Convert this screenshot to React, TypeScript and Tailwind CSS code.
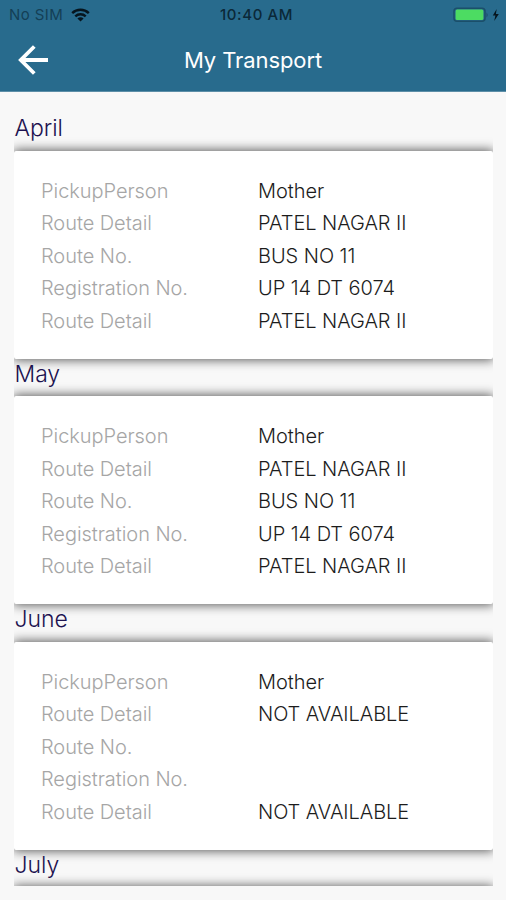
import React from 'react';

const labels = ['PickupPerson', 'Route Detail', 'Route No.', 'Registration No.', 'Route Detail'];

const months = [
  { name: 'April', values: ['Mother', 'PATEL NAGAR II', 'BUS NO 11', 'UP 14 DT 6074', 'PATEL NAGAR II'] },
  { name: 'May', values: ['Mother', 'PATEL NAGAR II', 'BUS NO 11', 'UP 14 DT 6074', 'PATEL NAGAR II'] },
  { name: 'June', values: ['Mother', 'NOT AVAILABLE', '', '', 'NOT AVAILABLE'] },
];

const StatusBar = () => (
  <div className="grid grid-cols-3 items-center h-[29px] pl-[9px] pr-[5px] text-[15px] text-[#0b2838]">
    <div className="flex items-center gap-[8px]">
      <span className="pt-px text-[#143f56] tracking-[0.4px]">No SIM</span>
      <svg width="19" height="14" viewBox="0 0 19 14" fill="none" stroke="#06151e" strokeWidth="2.4">
        <path d="M1.2 5.2a11.8 11.8 0 0 1 16.6 0" />
        <path d="M4.3 8.4a7.4 7.4 0 0 1 10.4 0" />
        <path d="M9.5 13.6L6.4 10.5a4.4 4.4 0 0 1 6.2 0z" fill="#06151e" stroke="none" />
      </svg>
    </div>
    <span className="pt-px pl-[3px] text-center font-medium whitespace-nowrap tracking-[0.6px]">10:40 AM</span>
    <div className="flex items-center justify-end">
      <svg width="48" height="16" viewBox="0 0 48 16">
        <rect x="1" y="1.2" width="31" height="13" rx="3" fill="none" stroke="#1b4f6a" strokeWidth="1.5" />
        <rect x="2.6" y="2.5" width="27.8" height="10.6" rx="1.5" fill="#4cdc62" />
        <path d="M33.5 5.5q2.4 2.5 0 5z" fill="#1b4f6a" />
        <path d="M43.7 2L39.8 8.6h2.6L41.2 14l4.6-7h-2.9z" fill="#06151e" />
      </svg>
    </div>
  </div>
);

const Header = () => (
  <header className="h-[92px] bg-[#286b8d] border-b border-[#5d8fa8]">
    <StatusBar />
    <div className="grid grid-cols-[60px_1fr_60px] items-center h-[62px]">
      <button className="pl-[17px]">
        <svg width="32" height="30" viewBox="0 0 32 30" fill="none" stroke="#fff" strokeWidth="3.8">
          <path d="M31 15H4M17.3 1.5L3.8 15l13.5 13.5" />
        </svg>
      </button>
      <h1 className="text-center text-[22px] leading-[62px] text-white tracking-[-0.1px]">My Transport</h1>
    </div>
  </header>
);

const MonthTitle = ({ name }: { name: string }) => (
  <h2 className="relative z-10 h-[37.5px] leading-[31px] pl-[0.5px] text-[23px] font-light tracking-[-0.05px] text-[#1d1250]">
    {name}
  </h2>
);

const App = () => {
  return (
    <div className="h-[900px] w-[506px] overflow-hidden bg-[#f8f8f8] font-['Inter',sans-serif]">
      <Header />
      <main className="ml-[14px] w-[479px] h-[794px] pt-[21px] overflow-hidden">
        {months.map((month) => (
          <section key={month.name}>
            <MonthTitle name={month.name} />
            <div className="h-[208px] rounded-[2px] bg-white pt-[24px] pl-[27px] shadow-[0_0_11px_1px_rgba(0,0,0,0.65)]">
              {labels.map((label, i) => (
                <div key={i} className="flex h-[32.5px] items-center text-[20px] font-light tracking-[-0.05px]">
                  <span className="w-[217px] text-[#a6a6a6]">{label}</span>
                  <span className="whitespace-nowrap text-[#1c1c1c]">{month.values[i]}</span>
                </div>
              ))}
            </div>
          </section>
        ))}
        <MonthTitle name="July" />
        <div className="h-[208px] rounded-[2px] bg-white shadow-[0_0_11px_1px_rgba(0,0,0,0.65)]" />
      </main>
    </div>
  );
};

export default App;
